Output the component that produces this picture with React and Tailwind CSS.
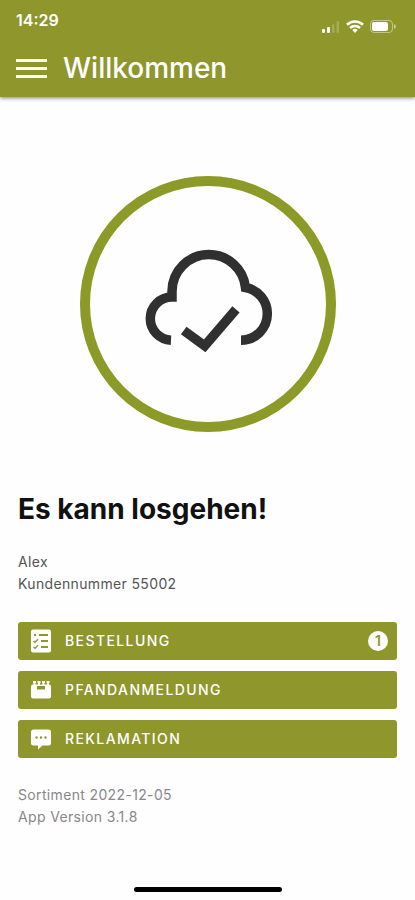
import React from 'react';

const OrderIcon = () => (
  <svg className="w-6 h-6" viewBox="0 0 24 24" aria-hidden="true">
    <rect x="2" y="0.500" width="20" height="23" rx="2" fill="#fff" />
    <g stroke="#8f962c" strokeWidth="2" fill="none">
      <path d="M10 6h9M12 12h7M12 18h7" />
      <path d="M5 6h2" />
      <path d="M4.500 12l1.500 1.300l3-3M4.500 18l1.500 1.300l3-3" strokeWidth="1.400" />
    </g>
  </svg>
);

const CrateIcon = () => (
  <svg className="w-6 h-6" viewBox="0 0 24 24" aria-hidden="true">
    <g fill="#fff">
      <path d="M4 3h3v2H4zM8.500 3h3v2h-3zM13 3h3v2h-3zM17.500 3h3v2h-3z" />
      <path d="M4.500 5h2v2h-2zM9 5h2v2H9zM13.500 5h2v2h-2zM18 5h2v2h-2z" />
      <rect x="2" y="6.500" width="20" height="14" rx="2" />
    </g>
    <rect x="8" y="8" width="8" height="3.500" fill="#8f962c" />
  </svg>
);

const ChatIcon = () => (
  <svg className="w-6 h-6" viewBox="0 0 24 24" aria-hidden="true">
    <path
      d="M4.500 2.500h15A2.500 2.500 0 0 1 22 5v11a2.500 2.500 0 0 1-2.500 2.500h-6L9 22.500v-4H4.500A2.500 2.500 0 0 1 2 16V5a2.500 2.500 0 0 1 2.500-2.500z"
      fill="#fff"
    />
    <g fill="#8f962c">
      <circle cx="7.500" cy="10.500" r="1.200" />
      <circle cx="12" cy="10.500" r="1.200" />
      <circle cx="16.500" cy="10.500" r="1.200" />
    </g>
  </svg>
);

const StatusIcons = () => (
  <svg className="w-[76px] h-4" viewBox="0 0 76 16" fill="#fff" aria-hidden="true">
    {/* signal */}
    <rect x="1" y="11" width="3" height="4" rx="1" />
    <rect x="6" y="9" width="3" height="6" rx="1" />
    <rect x="11" y="6" width="2.500" height="9" rx="1" opacity="0.2" />
    <rect x="15.500" y="3" width="2.500" height="12" rx="1" opacity="0.2" />
    {/* wifi */}
    <g fill="none" stroke="#fff" strokeWidth="2.600">
      <path d="M26 6.700a11.500 11.500 0 0 1 16 0" />
      <path d="M29 10a7.200 7.200 0 0 1 10 0" />
    </g>
    <path d="M31.300 12a4 4 0 0 1 5.400 0L34 15z" />
    {/* battery */}
    <rect x="49.500" y="2.500" width="22" height="12" rx="3.500" fill="none" stroke="#fff" opacity="0.45" />
    <rect x="51" y="4" width="16" height="9" rx="2" />
    <path d="M73 6v5a2.600 2.600 0 0 0 0-5z" opacity="0.5" />
  </svg>
);

const actions = [
  { label: 'BESTELLUNG', icon: OrderIcon, count: 1 },
  { label: 'PFANDANMELDUNG', icon: CrateIcon },
  { label: 'REKLAMATION', icon: ChatIcon },
];

const App = () => {
  return (
    <div className="min-h-screen flex flex-col bg-[#fefefe] font-['Inter','Liberation_Sans',sans-serif]">
      <header className="bg-[#8f962c] text-white shadow-[0_1px_4px_rgba(0,0,0,0.5)]">
        <div className="flex items-center justify-between h-10 pl-4 pr-[18px]">
          <span className="text-base font-semibold">14:29</span>
          <div className="pt-3">
            <StatusIcons />
          </div>
        </div>
        <div className="flex items-center gap-4 px-4 py-1.5">
          <button type="button" aria-label="Menü" className="flex flex-col gap-[5px] w-[31px]">
            <span className="h-[3px] w-full bg-white" />
            <span className="h-[3px] w-full bg-white" />
            <span className="h-[3px] w-full bg-white" />
          </button>
          <h1 className="text-[28px] leading-[45px] font-medium">Willkommen</h1>
        </div>
      </header>

      <main className="flex-1 px-[18px]">
        <div className="flex justify-center pt-[79px]">
          <svg className="w-64 h-64" viewBox="0 0 256 256" fill="none" aria-hidden="true">
            <circle cx="128" cy="128" r="123" stroke="#8c9a27" strokeWidth="10" />
            <g stroke="#303030" strokeWidth="9.500" strokeMiterlimit="10">
              <path d="M91 164.200A21.600 21.600 0 0 1 70.300 142.600A21.600 21.600 0 0 1 92 121V115.500A37 37 0 0 1 128.800 78.500A37 37 0 0 1 165.500 111.500A26.300 26.300 0 0 1 187.300 138A26.300 26.300 0 0 1 161 164.200" />
              <path d="M103.700 154.500L124.700 169.800L156 133.300" />
            </g>
          </svg>
        </div>

        <h2 className="mt-[59px] text-[28px] leading-9 font-bold text-[#111]">Es kann losgehen!</h2>
        <p className="mt-6 text-sm leading-[22px] tracking-wide text-[#555]">
          Alex
          <br />
          Kundennummer 55002
        </p>

        <div className="mt-[27px] flex flex-col gap-[11px]">
          {actions.map(({ label, icon: Icon, count }) => (
            <button
              key={label}
              type="button"
              className="flex items-center gap-3 h-[38px] pl-[11px] pr-[9px] rounded-[3px] bg-[#8f962c] text-white text-sm font-medium tracking-widest"
            >
              <Icon />
              <span>{label}</span>
              {count && (
                <span className="ml-auto w-5 h-5 flex items-center justify-center rounded-full bg-white text-[#8f962c] text-sm font-semibold tracking-normal">
                  {count}
                </span>
              )}
            </button>
          ))}
        </div>

        <p className="mt-[26px] text-sm leading-[22px] tracking-wide text-[#888]">
          Sortiment 2022-12-05
          <br />
          App Version 3.1.8
        </p>
      </main>

      <div className="flex justify-center pb-2">
        <div className="w-[148px] h-[5px] rounded-full bg-black" />
      </div>
    </div>
  );
};

export default App;
